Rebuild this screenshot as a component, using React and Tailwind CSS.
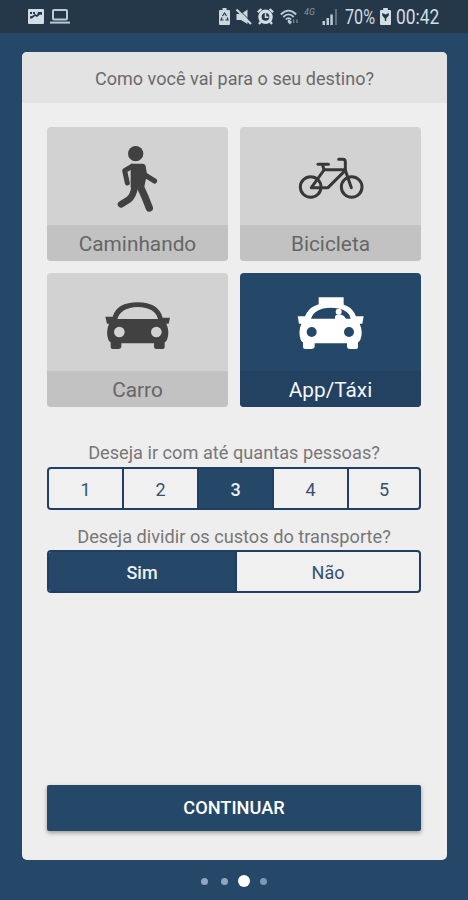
import React, { useState } from 'react';
import clsx from 'clsx';

const WalkIcon = () => (
    <svg width="41" height="67" viewBox="231 75 123 201" fill="none" stroke="#414141" strokeLinecap="round" strokeLinejoin="round">
        <circle cx="287" cy="101" r="23" fill="#414141" stroke="none" />
        <path d="M272 131H308Q316 131 317 139L321 163L312 204H272V142Z" fill="#414141" stroke="none" />
        <path d="M276 139L254 152L262 189" strokeWidth="15" />
        <path d="M310 162L344 183" strokeWidth="15" />
        <path d="M285 198Q280 228 266 239L243 253" strokeWidth="20" />
        <path d="M299 196Q315 228 328 264" strokeWidth="22" />
    </svg>
);

const BikeIcon = () => (
    <svg width="66" height="43" viewBox="188 112 198 129" fill="none" stroke="#383838" strokeLinecap="round" strokeLinejoin="round">
        <circle cx="226" cy="202" r="31" strokeWidth="9" />
        <circle cx="349" cy="202" r="31" strokeWidth="9" />
        <path d="M248 134H279" strokeWidth="9" />
        <path d="M262 136L266 151L228 204H278L330 152L348 204" strokeWidth="9" />
        <path d="M266 150H330V127Q330 119 322 119H310" strokeWidth="9" />
    </svg>
);

const CarIcon = () => (
    <svg width="65" height="48" viewBox="194 101 195 144" fill="#414141">
        <path
            fillRule="evenodd"
            d="M195 145H217Q230 102 292 102Q354 102 367 148H389L385 166H378Q389 190 380 214Q377 220 373 222V237Q373 242 367 242H348Q342 242 341 236V225H243V236Q241 242 235 242H217Q211 242 211 236V222Q207 220 204 214Q196 190 206 166H200ZM231 152H353Q345 118 292 116Q241 118 231 152Z"
        />
        <circle cx="237" cy="191" r="16" fill="#d2d2d2" />
        <circle cx="348" cy="191" r="16" fill="#d2d2d2" />
    </svg>
);

const TaxiIcon = () => (
    <svg width="67" height="53" viewBox="187 86 201 159" fill="#fff">
        <path d="M252 87H327V112H252Z" />
        <path
            fillRule="evenodd"
            d="M189 144H211Q226 103 288 103Q350 103 364 144H387L383 166H375Q386 190 377 214Q374 220 370 222V237Q370 242 364 242H345Q338 242 337 236V225H240V236Q237 242 231 242H212Q205 242 205 236V222Q201 220 198 214Q190 190 200 166H193ZM229 151H348Q342 119 288 118Q239 119 229 151Z"
        />
        <path d="M301 152V144Q303 139 312 138Q328 139 334 152Z" />
        <circle cx="312" cy="130" r="9" />
        <circle cx="231" cy="191" r="15" fill="#254768" />
        <circle cx="343" cy="191" r="15" fill="#254768" />
    </svg>
);

const PictureIcon = () => (
    <svg width="16" height="15" viewBox="0 0 16 15">
        <rect width="16" height="15" rx="1" fill="#d3dde4" />
        <path d="M2 3H4V5H2ZM5 3H7V5H5ZM10 3H14V6L12 5.5L9 8L7 7L4 9.5H2V7.5L5 6.5L7 5L9 6Z" fill="#24384a" />
    </svg>
);

const LaptopIcon = () => (
    <svg width="20" height="15" viewBox="0 0 20 15" fill="none" stroke="#bccbd4" strokeWidth="2">
        <rect x="3" y="1" width="14" height="9.6" rx="1" />
        <path d="M0 13.6H20" />
    </svg>
);

const BatteryRecycleIcon = () => (
    <svg width="11" height="17" viewBox="0 0 11 17">
        <path d="M3.5 0H7.5V2H10Q11 2 11 3V16Q11 17 10 17H1Q0 17 0 16V3Q0 2 1 2H3.5Z" fill="#cbd6dd" />
        <path d="M3.5 8L5.5 5L7.5 8M8.2 9.5L9 12H6.5M4.5 12H2L3 9.5" fill="none" stroke="#24384a" strokeWidth="1.2" />
    </svg>
);

const MuteIcon = () => (
    <svg width="16" height="16" viewBox="0 0 16 16">
        <path d="M0.5 5H5L11.5 0.5V15L5 11H0.5Z" fill="#cbd6dd" />
        <path d="M2.2 0L16 13.5" stroke="#24384a" strokeWidth="1" />
        <path d="M0.5 0.5L15 15" stroke="#cbd6dd" strokeWidth="2.2" />
    </svg>
);

const AlarmIcon = () => (
    <svg width="17" height="17" viewBox="0 0 17 17">
        <circle cx="8.5" cy="8.8" r="5.6" fill="#24384a" stroke="#d3dde4" strokeWidth="3.4" />
        <path d="M0.8 4.3L4.4 1M16.2 4.3L12.6 1M3.6 14L2 16M13.4 14L15 16" stroke="#d3dde4" strokeWidth="2.2" />
        <path d="M8.5 5.3V9.2H11.5" fill="none" stroke="#d3dde4" strokeWidth="1.5" />
    </svg>
);

const WifiIcon = () => (
    <svg width="19" height="16" viewBox="0 0 19 16" fill="none" stroke="#bccbd4" strokeWidth="1.8">
        <path d="M0.8 5.5Q8.5 -2.3 16.2 5.5" />
        <path d="M3.3 8Q8.5 2.8 13.7 8" />
        <path d="M5.8 10.5Q8.5 7.7 11.2 10.5" />
        <path d="M8.5 10L12 13L10 15.5L7.5 13Z" fill="#bccbd4" stroke="none" />
        <path d="M13.6 10.5V14M17 10.5V14" stroke="#738591" strokeWidth="1.4" />
    </svg>
);

const SignalIcon = () => (
    <svg width="16" height="16" viewBox="0 0 16 16">
        <path d="M0.5 12H3V16H0.5ZM4.5 9H7V16H4.5ZM8.3 5.5H10.8V16H8.3Z" fill="#bccbd4" />
        <path d="M13 0H15V16H13Z" fill="#5d707e" />
    </svg>
);

const BatteryChargeIcon = () => (
    <svg width="11" height="17" viewBox="0 0 11 17">
        <path d="M3.2 0H7.8V2H10Q11 2 11 3V16Q11 17 10 17H1Q0 17 0 16V3Q0 2 1 2H3.2Z" fill="#d3dde4" />
        <path d="M2.2 5L5.5 6.6L8.8 5V7.6L6.2 10.4V13H4.8V10.4L2.2 7.6Z" fill="#24384a" />
    </svg>
);

const StatusBar = () => (
    <header className="h-[33px] shrink-0 bg-[#24384a] flex items-center justify-between pl-7 pr-[29px] text-[#d3dde4]">
        <div className="flex items-center gap-[6px]">
            <PictureIcon />
            <LaptopIcon />
        </div>
        <div className="flex items-center">
            <BatteryRecycleIcon />
            <span className="ml-[6px]"><MuteIcon /></span>
            <span className="ml-[5px]"><AlarmIcon /></span>
            <span className="ml-[6px]"><WifiIcon /></span>
            <span className="ml-[5px] w-[13px] h-[18px] text-[9px] leading-[9px] italic text-[#8496a2]">4G</span>
            <span className="ml-[5px]"><SignalIcon /></span>
            <span className="ml-[7px] w-[31px] text-[20px] leading-none origin-left scale-x-[.81] whitespace-nowrap">70%</span>
            <span className="ml-[4px]"><BatteryChargeIcon /></span>
            <span className="ml-[5px] w-[43px] text-[20px] leading-none origin-left scale-x-[.87] whitespace-nowrap">00:42</span>
        </div>
    </header>
);

const modes = [
    { id: 'walk', label: 'Caminhando', icon: WalkIcon, pad: 'pt-[18px]' },
    { id: 'bike', label: 'Bicicleta', icon: BikeIcon, pad: 'pt-[30px]' },
    { id: 'car', label: 'Carro', icon: CarIcon, pad: 'pt-[29px]' },
    { id: 'taxi', label: 'App/Táxi', icon: TaxiIcon, pad: 'pt-[24px]' },
];

const ModeTile = ({ mode, active, onClick }) => {
    const Icon = mode.icon;
    return (
        <button
            type="button"
            onClick={onClick}
            className={clsx(
                'h-[133.5px] rounded-[4px] overflow-hidden flex flex-col',
                active ? 'bg-[#254768] text-[#f4f6f8]' : 'bg-[#d2d2d2] text-[#666]'
            )}
        >
            <span className={clsx('flex-1 w-full flex justify-center items-start', mode.pad)}>
                <Icon />
            </span>
            <span className={clsx('h-9 w-full text-center text-[20.8px] leading-[38px]', active ? 'bg-[#234161]' : 'bg-[#c2c2c2]')}>
                {mode.label}
            </span>
        </button>
    );
};

// The last cell takes whatever width the fixed ones leave over
const Segmented = ({ options, value, onChange, cellClass }) => (
    <div className="flex h-[43px] shrink-0 rounded-[4px] border-2 border-[#213f66] bg-[#f0f0f0] overflow-hidden divide-x-2 divide-[#213f66]">
        {options.map((option, i) => (
            <button
                key={option}
                type="button"
                onClick={() => onChange(option)}
                className={clsx(
                    'pt-[2px] text-[18px] leading-none',
                    i < options.length - 1 ? cellClass : 'flex-1',
                    option === value ? 'bg-[#254768] text-[#edf2f7] font-medium' : 'text-[#36506f]'
                )}
            >
                {option}
            </button>
        ))}
    </div>
);

const App = () => {
    const [mode, setMode] = useState('taxi');
    const [people, setPeople] = useState('3');
    const [split, setSplit] = useState('Sim');

    return (
        <div className="h-[900px] w-[468px] bg-[#254768] flex flex-col font-['Roboto',sans-serif] overflow-hidden">
            <StatusBar />

            <main className="mt-[19px] ml-[22px] w-[425px] h-[808px] shrink-0 rounded-[5px] bg-[#eee] overflow-hidden flex flex-col">
                <h1 className="h-[51px] shrink-0 bg-[#e3e3e3] text-center text-[18px] leading-[53px] text-[#6a6a6a] tracking-[0.04px]">
                    Como você vai para o seu destino?
                </h1>

                <div className="flex-1 flex flex-col pt-6 pl-[25px] pr-[26px] pb-[29px]">
                    <div className="grid grid-cols-2 gap-x-3 gap-y-[12.5px]">
                        {modes.map((m) => (
                            <ModeTile key={m.id} mode={m} active={m.id === mode} onClick={() => setMode(m.id)} />
                        ))}
                    </div>

                    <p className="mt-[33.5px] h-[27px] text-center text-[18.2px] leading-[25px] text-[#777]">Deseja ir com até quantas pessoas?</p>
                    <Segmented options={['1', '2', '3', '4', '5']} value={people} onChange={setPeople} cellClass="w-[75px]" />

                    <p className="mt-[13px] h-[27px] text-center text-[18.2px] leading-[27px] text-[#777]">Deseja dividir os custos do transporte?</p>
                    <Segmented options={['Sim', 'Não']} value={split} onChange={setSplit} cellClass="w-[188px]" />

                    <button
                        type="button"
                        className="mt-auto h-[46px] w-full shrink-0 rounded-[2px] bg-[#254768] text-white text-[18.2px] leading-none font-medium shadow-[0_2px_4px_rgba(0,0,0,0.35)]"
                    >
                        CONTINUAR
                    </button>
                </div>
            </main>

            {/* Step indicator */}
            <div className="mt-[15px] flex items-center justify-center">
                <span className="size-[7px] rounded-full bg-[#8fa6c0]" />
                <span className="ml-[12.5px] size-[7px] rounded-full bg-[#8fa6c0]" />
                <span className="ml-[10px] size-3 rounded-full bg-white" />
                <span className="ml-[10px] size-[7px] rounded-full bg-[#7b9ab3]" />
            </div>
        </div>
    );
};

export default App;
